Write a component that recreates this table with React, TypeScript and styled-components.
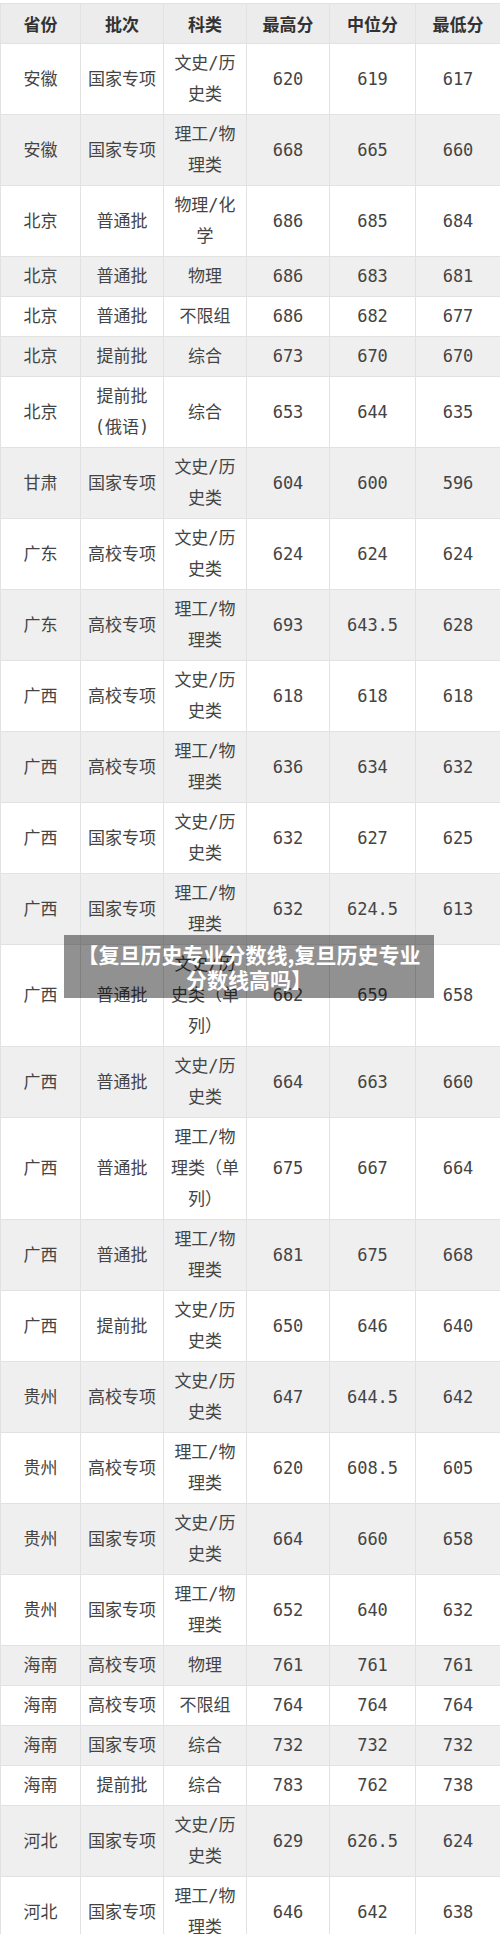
import React from "react";
import styled, { createGlobalStyle } from "styled-components";

const GlobalStyle = createGlobalStyle`
  html, body {
    margin: 0;
    padding: 0;
    background: #ffffff;
  }
  body {
    font-family: "Noto Sans CJK SC", "Noto Sans", sans-serif;
    color: #444;
  }
`;

type Row = {
  province: string;
  batch: string[];
  subject: string[];
  high: string;
  mid: string;
  low: string;
};

const rows: Row[] = [
  { province: "安徽", batch: ["国家专项"], subject: ["文史/历", "史类"], high: "620", mid: "619", low: "617" },
  { province: "安徽", batch: ["国家专项"], subject: ["理工/物", "理类"], high: "668", mid: "665", low: "660" },
  { province: "北京", batch: ["普通批"], subject: ["物理/化", "学"], high: "686", mid: "685", low: "684" },
  { province: "北京", batch: ["普通批"], subject: ["物理"], high: "686", mid: "683", low: "681" },
  { province: "北京", batch: ["普通批"], subject: ["不限组"], high: "686", mid: "682", low: "677" },
  { province: "北京", batch: ["提前批"], subject: ["综合"], high: "673", mid: "670", low: "670" },
  { province: "北京", batch: ["提前批", "(俄语)"], subject: ["综合"], high: "653", mid: "644", low: "635" },
  { province: "甘肃", batch: ["国家专项"], subject: ["文史/历", "史类"], high: "604", mid: "600", low: "596" },
  { province: "广东", batch: ["高校专项"], subject: ["文史/历", "史类"], high: "624", mid: "624", low: "624" },
  { province: "广东", batch: ["高校专项"], subject: ["理工/物", "理类"], high: "693", mid: "643.5", low: "628" },
  { province: "广西", batch: ["高校专项"], subject: ["文史/历", "史类"], high: "618", mid: "618", low: "618" },
  { province: "广西", batch: ["高校专项"], subject: ["理工/物", "理类"], high: "636", mid: "634", low: "632" },
  { province: "广西", batch: ["国家专项"], subject: ["文史/历", "史类"], high: "632", mid: "627", low: "625" },
  { province: "广西", batch: ["国家专项"], subject: ["理工/物", "理类"], high: "632", mid: "624.5", low: "613" },
  { province: "广西", batch: ["普通批"], subject: ["文史/历", "史类（单", "列）"], high: "662", mid: "659", low: "658" },
  { province: "广西", batch: ["普通批"], subject: ["文史/历", "史类"], high: "664", mid: "663", low: "660" },
  { province: "广西", batch: ["普通批"], subject: ["理工/物", "理类（单", "列）"], high: "675", mid: "667", low: "664" },
  { province: "广西", batch: ["普通批"], subject: ["理工/物", "理类"], high: "681", mid: "675", low: "668" },
  { province: "广西", batch: ["提前批"], subject: ["文史/历", "史类"], high: "650", mid: "646", low: "640" },
  { province: "贵州", batch: ["高校专项"], subject: ["文史/历", "史类"], high: "647", mid: "644.5", low: "642" },
  { province: "贵州", batch: ["高校专项"], subject: ["理工/物", "理类"], high: "620", mid: "608.5", low: "605" },
  { province: "贵州", batch: ["国家专项"], subject: ["文史/历", "史类"], high: "664", mid: "660", low: "658" },
  { province: "贵州", batch: ["国家专项"], subject: ["理工/物", "理类"], high: "652", mid: "640", low: "632" },
  { province: "海南", batch: ["高校专项"], subject: ["物理"], high: "761", mid: "761", low: "761" },
  { province: "海南", batch: ["高校专项"], subject: ["不限组"], high: "764", mid: "764", low: "764" },
  { province: "海南", batch: ["国家专项"], subject: ["综合"], high: "732", mid: "732", low: "732" },
  { province: "海南", batch: ["提前批"], subject: ["综合"], high: "783", mid: "762", low: "738" },
  { province: "河北", batch: ["国家专项"], subject: ["文史/历", "史类"], high: "629", mid: "626.5", low: "624" },
  { province: "河北", batch: ["国家专项"], subject: ["理工/物", "理类"], high: "646", mid: "642", low: "638" },
];

const Page = styled.div`
  position: relative;
  padding-top: 3px;
`;

const Table = styled.table`
  width: 500px;
  border-collapse: collapse;
  table-layout: fixed;
  border-top: 1px solid #e6e6e6;
`;

const HeadCell = styled.th`
  background: #ececec;
  color: #333;
  font-size: 17px;
  font-weight: 700;
  line-height: 31px;
  padding: 4px 2px;
  border: 1px solid #e2e2e2;
  text-align: center;
  vertical-align: middle;
`;

const BodyRow = styled.tr<{ $shaded: boolean }>`
  background: ${(p) => (p.$shaded ? "#efefef" : "#ffffff")};
`;

/* ASCII (digits, slash, parens) comes out of the mono face, CJK falls through */
const Cell = styled.td`
  font-family: "DejaVu Sans Mono", "Noto Sans CJK SC", monospace;
  font-size: 17px;
  line-height: 31px;
  color: #444;
  padding: 4px 1px;
  border: 1px solid #e2e2e2;
  text-align: center;
  vertical-align: middle;
`;

const Line = styled.span`
  display: block;
  white-space: nowrap;
`;

const Banner = styled.div`
  position: absolute;
  top: 935px;
  left: 64px;
  width: 370px;
  height: 63px;
  box-sizing: border-box;
  padding-top: 7px;
  background: rgba(0, 0, 0, 0.43);
  color: #ffffff;
  font-family: "Noto Sans CJK SC", "Noto Sans", sans-serif;
  font-size: 21px;
  font-weight: 700;
  line-height: 25px;
  text-align: center;
`;

const columns = [
  { title: "省份", width: 80 },
  { title: "批次", width: 83 },
  { title: "科类", width: 83 },
  { title: "最高分", width: 83 },
  { title: "中位分", width: 86 },
  { title: "最低分", width: 85 },
];

function Lines({ items }: { items: string[] }) {
  return (
    <>
      {items.map((t, i) => (
        <Line key={i}>{t}</Line>
      ))}
    </>
  );
}

export default function App() {
  return (
    <Page>
      <GlobalStyle />
      <Table>
        <colgroup>
          {columns.map((c) => (
            <col key={c.title} style={{ width: c.width }} />
          ))}
        </colgroup>
        <thead>
          <tr>
            {columns.map((c) => (
              <HeadCell key={c.title}>{c.title}</HeadCell>
            ))}
          </tr>
        </thead>
        <tbody>
          {rows.map((r, i) => (
            <BodyRow key={i} $shaded={i % 2 === 1}>
              <Cell>{r.province}</Cell>
              <Cell>
                <Lines items={r.batch} />
              </Cell>
              <Cell>
                <Lines items={r.subject} />
              </Cell>
              <Cell>{r.high}</Cell>
              <Cell>{r.mid}</Cell>
              <Cell>{r.low}</Cell>
            </BodyRow>
          ))}
        </tbody>
      </Table>
      <Banner>
        <Line>【复旦历史专业分数线,复旦历史专业</Line>
        <Line>分数线高吗】</Line>
      </Banner>
    </Page>
  );
}
